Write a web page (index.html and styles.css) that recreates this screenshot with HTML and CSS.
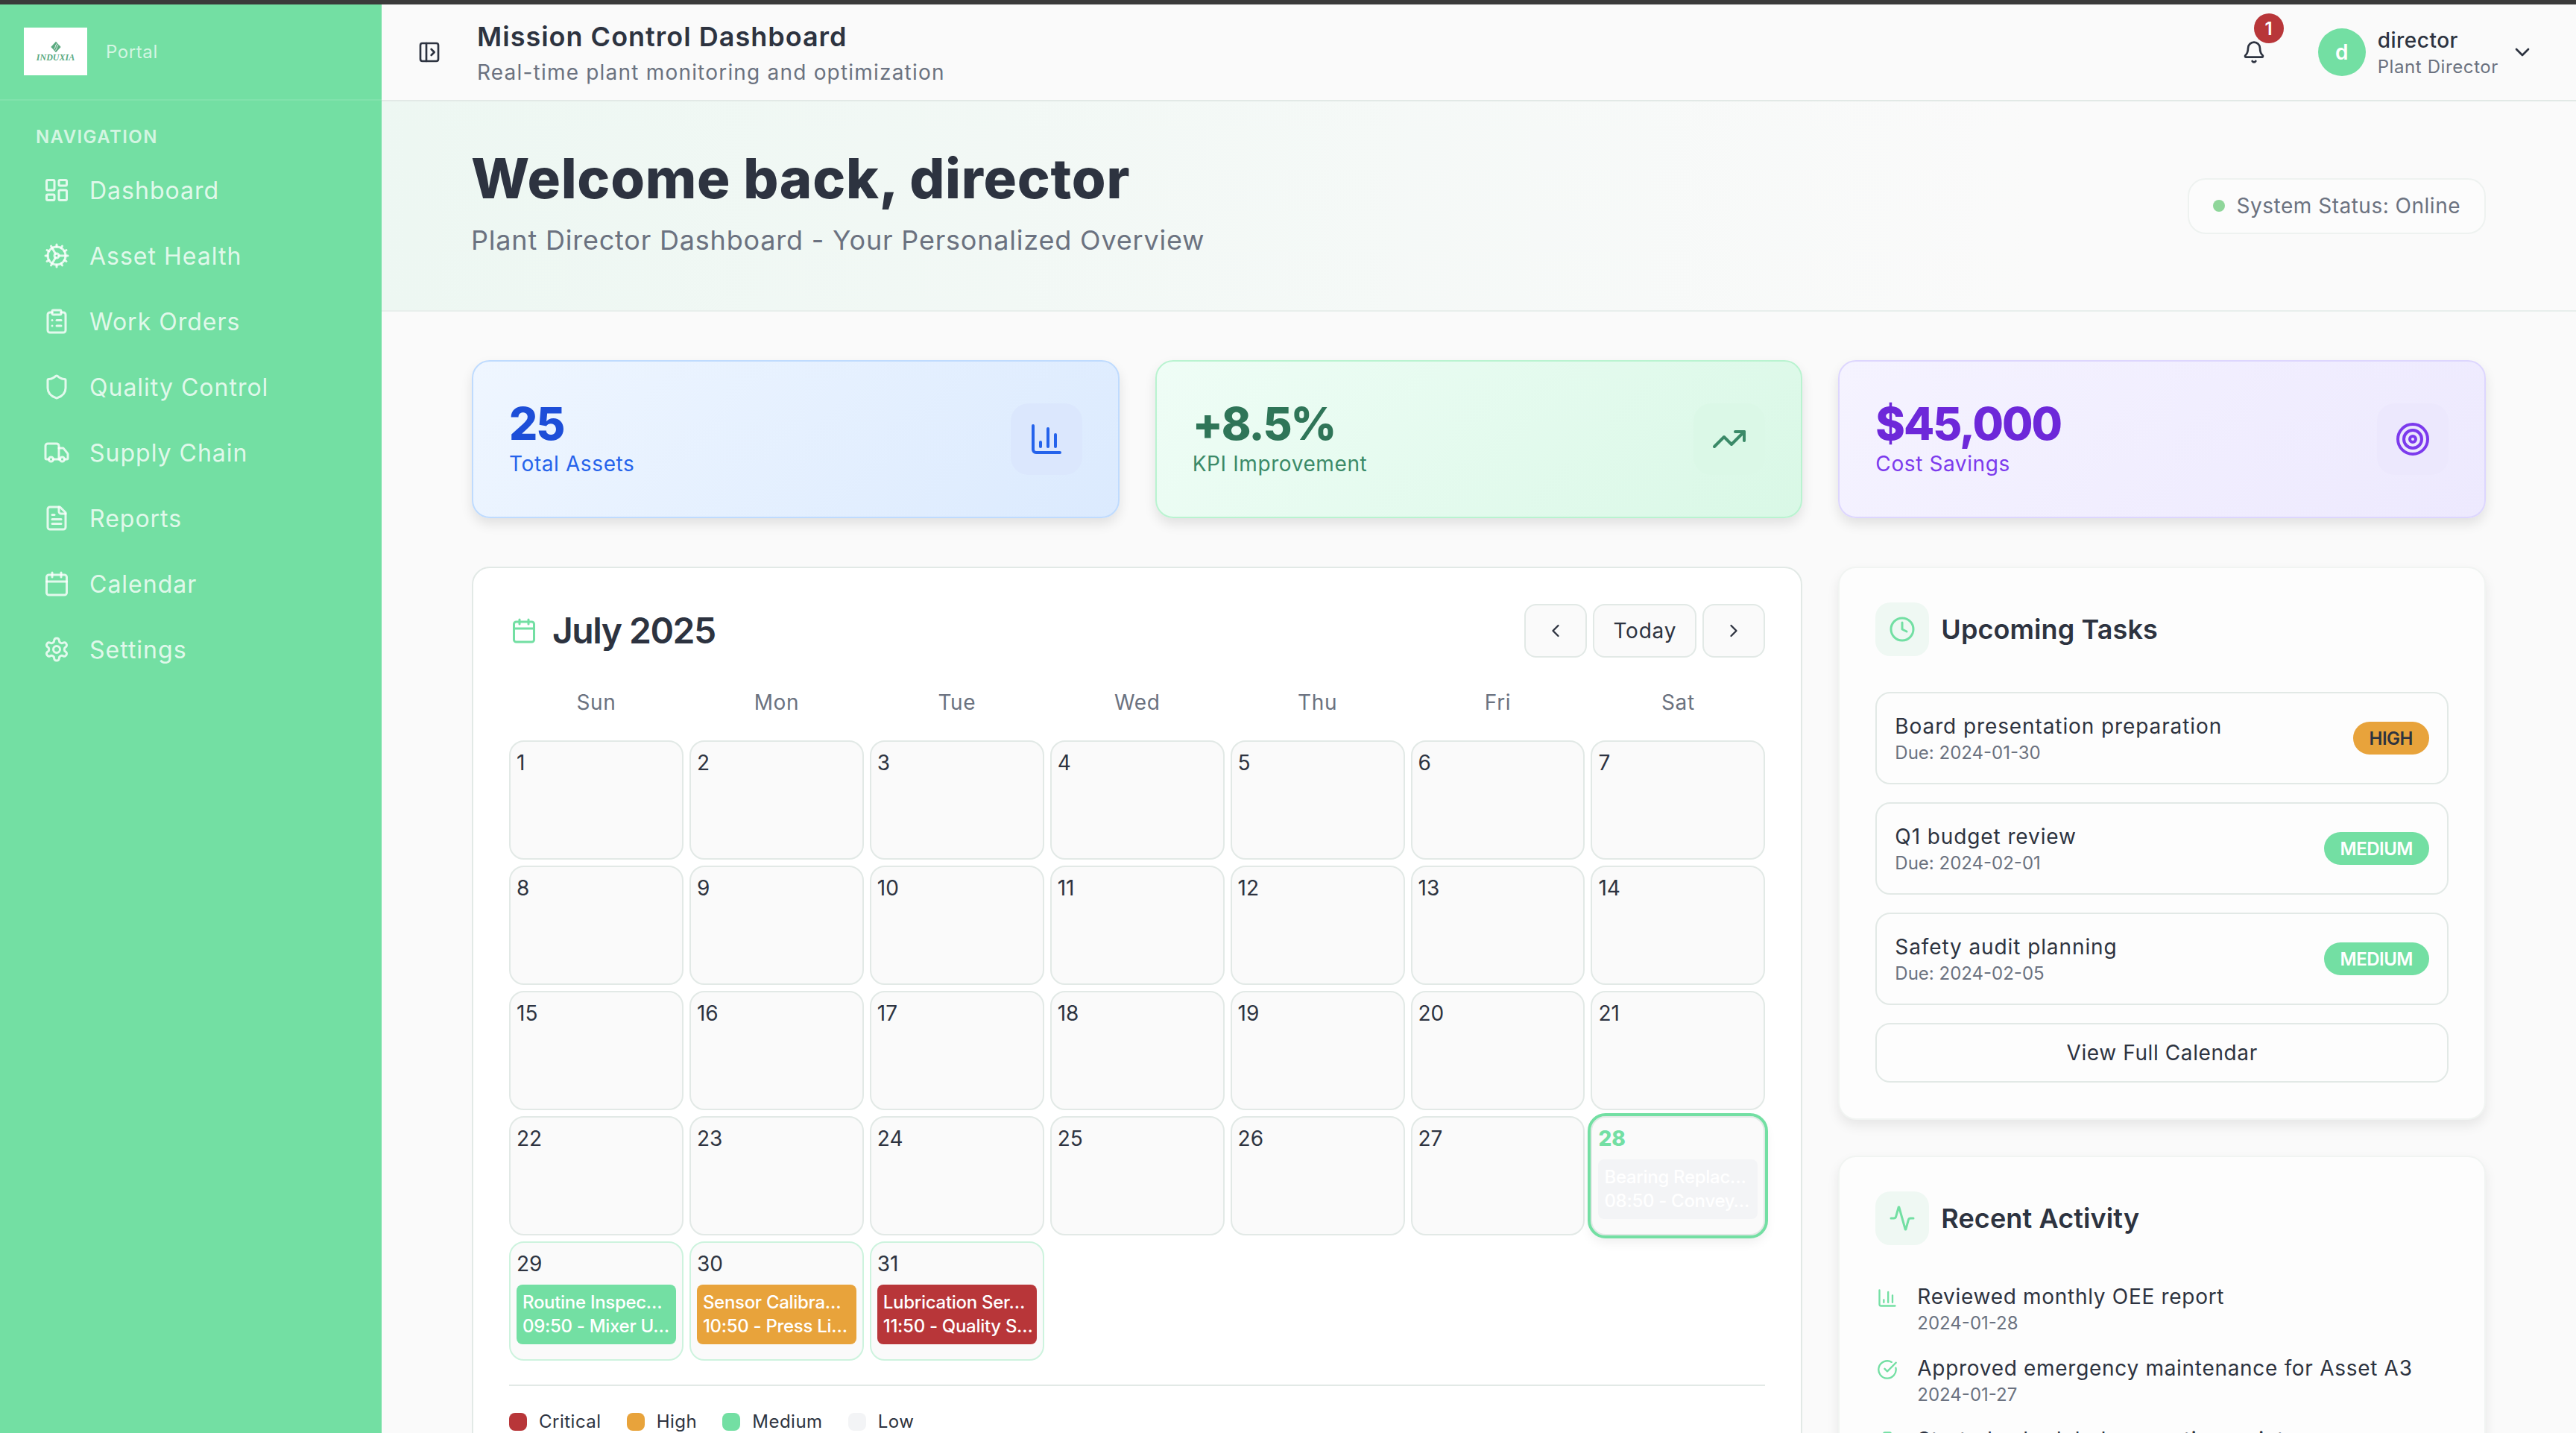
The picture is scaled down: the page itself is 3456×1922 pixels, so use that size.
FILE: index.html
```html
<!DOCTYPE html>
<html lang="en">
<head>
    <meta charset="UTF-8">
    <meta name="viewport" content="width=device-width, initial-scale=1.0">
    <title>Mission Control Dashboard</title>
    <link rel="stylesheet" href="styles.css">
</head>
<body>
    <svg class="sprite" xmlns="http://www.w3.org/2000/svg">
        <symbol id="i-dashboard" viewBox="0 0 24 24"><rect x="3" y="3" width="7" height="9" rx="1"/><rect x="14" y="3" width="7" height="5" rx="1"/><rect x="14" y="12" width="7" height="9" rx="1"/><rect x="3" y="16" width="7" height="5" rx="1"/></symbol>
        <symbol id="i-cog" viewBox="0 0 24 24"><path d="M12 20a8 8 0 1 0 0-16 8 8 0 0 0 0 16Z"/><path d="M12 14a2 2 0 1 0 0-4 2 2 0 0 0 0 4Z"/><path d="M12 2v2"/><path d="M12 22v-2"/><path d="m17 20.66-1-1.73"/><path d="M11 10.27 7 3.34"/><path d="m20.66 17-1.73-1"/><path d="m3.34 7 1.73 1"/><path d="M14 12h8"/><path d="M2 12h2"/><path d="m20.66 7-1.73 1"/><path d="m3.34 17 1.73-1"/><path d="m17 3.34-1 1.73"/><path d="m11 13.73-4 6.93"/></symbol>
        <symbol id="i-clipboard" viewBox="0 0 24 24"><rect x="8" y="2" width="8" height="4" rx="1"/><path d="M16 4h2a2 2 0 0 1 2 2v14a2 2 0 0 1-2 2H6a2 2 0 0 1-2-2V6a2 2 0 0 1 2-2h2"/><path d="M12 11h4"/><path d="M12 16h4"/><path d="M8 11h.01"/><path d="M8 16h.01"/></symbol>
        <symbol id="i-shield" viewBox="0 0 24 24"><path d="M20 13c0 5-3.5 7.5-7.66 8.95a1 1 0 0 1-.67-.01C7.5 20.5 4 18 4 13V6a1 1 0 0 1 1-1c2 0 4.5-1.2 6.24-2.72a1.17 1.17 0 0 1 1.52 0C14.51 3.81 17 5 19 5a1 1 0 0 1 1 1z"/></symbol>
        <symbol id="i-truck" viewBox="0 0 24 24"><path d="M14 18V6a2 2 0 0 0-2-2H4a2 2 0 0 0-2 2v11a1 1 0 0 0 1 1h2"/><path d="M15 18H9"/><path d="M19 18h2a1 1 0 0 0 1-1v-3.65a1 1 0 0 0-.22-.624l-3.48-4.35A1 1 0 0 0 17.52 8H14"/><circle cx="17" cy="18" r="2"/><circle cx="7" cy="18" r="2"/></symbol>
        <symbol id="i-file" viewBox="0 0 24 24"><path d="M15 2H6a2 2 0 0 0-2 2v16a2 2 0 0 0 2 2h12a2 2 0 0 0 2-2V7Z"/><path d="M14 2v4a2 2 0 0 0 2 2h4"/><path d="M10 9H8"/><path d="M16 13H8"/><path d="M16 17H8"/></symbol>
        <symbol id="i-calendar" viewBox="0 0 24 24"><path d="M8 2v4"/><path d="M16 2v4"/><rect x="3" y="4" width="18" height="18" rx="2"/><path d="M3 10h18"/></symbol>
        <symbol id="i-settings" viewBox="0 0 24 24"><path d="M12.22 2h-.44a2 2 0 0 0-2 2v.18a2 2 0 0 1-1 1.73l-.43.25a2 2 0 0 1-2 0l-.15-.08a2 2 0 0 0-2.73.73l-.22.38a2 2 0 0 0 .73 2.73l.15.1a2 2 0 0 1 1 1.72v.51a2 2 0 0 1-1 1.74l-.15.09a2 2 0 0 0-.73 2.73l.22.38a2 2 0 0 0 2.73.73l.15-.08a2 2 0 0 1 2 0l.43.25a2 2 0 0 1 1 1.73V20a2 2 0 0 0 2 2h.44a2 2 0 0 0 2-2v-.18a2 2 0 0 1 1-1.73l.43-.25a2 2 0 0 1 2 0l.15.08a2 2 0 0 0 2.73-.73l.22-.39a2 2 0 0 0-.73-2.73l-.15-.08a2 2 0 0 1-1-1.74v-.5a2 2 0 0 1 1-1.74l.15-.09a2 2 0 0 0 .73-2.73l-.22-.38a2 2 0 0 0-2.73-.73l-.15.08a2 2 0 0 1-2 0l-.43-.25a2 2 0 0 1-1-1.73V4a2 2 0 0 0-2-2z"/><circle cx="12" cy="12" r="3"/></symbol>
        <symbol id="i-panel" viewBox="0 0 24 24"><rect x="3" y="3" width="18" height="18" rx="2"/><path d="M9 3v18"/><path d="m14 9 3 3-3 3"/></symbol>
        <symbol id="i-bell" viewBox="0 0 24 24"><path d="M10.268 21a2 2 0 0 0 3.464 0"/><path d="M3.262 15.326A1 1 0 0 0 4 17h16a1 1 0 0 0 .74-1.673C19.41 13.956 18 12.499 18 8A6 6 0 0 0 6 8c0 4.499-1.411 5.956-2.738 7.326"/></symbol>
        <symbol id="i-down" viewBox="0 0 24 24"><path d="m6 9 6 6 6-6"/></symbol>
        <symbol id="i-left" viewBox="0 0 24 24"><path d="m15 18-6-6 6-6"/></symbol>
        <symbol id="i-right" viewBox="0 0 24 24"><path d="m9 18 6-6-6-6"/></symbol>
        <symbol id="i-chart" viewBox="0 0 24 24"><path d="M3 3v16a2 2 0 0 0 2 2h16"/><path d="M18 17V9"/><path d="M13 17V5"/><path d="M8 17v-3"/></symbol>
        <symbol id="i-trend" viewBox="0 0 24 24"><polyline points="22 7 13.5 15.5 8.5 10.5 2 17"/><polyline points="16 7 22 7 22 13"/></symbol>
        <symbol id="i-target" viewBox="0 0 24 24"><circle cx="12" cy="12" r="10"/><circle cx="12" cy="12" r="6"/><circle cx="12" cy="12" r="2"/></symbol>
        <symbol id="i-clock" viewBox="0 0 24 24"><circle cx="12" cy="12" r="10"/><polyline points="12 6 12 12 16 14"/></symbol>
        <symbol id="i-activity" viewBox="0 0 24 24"><path d="M22 12h-2.48a2 2 0 0 0-1.93 1.46l-2.35 8.36a.25.25 0 0 1-.48 0L9.24 2.18a.25.25 0 0 0-.48 0l-2.35 8.36A2 2 0 0 1 4.49 12H2"/></symbol>
        <symbol id="i-check" viewBox="0 0 24 24"><path d="M21.801 10A10 10 0 1 1 17 3.335"/><path d="m9 11 3 3L22 4"/></symbol>
    </svg>

    <div class="top-strip"></div>
    <div class="app">
        <aside class="sidebar">
            <div class="brand">
                <div class="logo-box">
                    <svg class="logo-mark" viewBox="0 0 24 24"><path d="M12 1 22 12 12 23 2 12Z" fill="#5aa97f"/><path d="M8 17C12 13 10 9 14 5M11 19C15 15 13 11 17 7" fill="none" stroke="#fff" stroke-width="1.3"/></svg>
                    <span class="logo-text">INDUXIA</span>
                </div>
                <span class="brand-portal">Portal</span>
            </div>
            <nav class="nav">
                <div class="nav-title">NAVIGATION</div>
                <a class="nav-item"><svg class="icon"><use href="#i-dashboard"/></svg>Dashboard</a>
                <a class="nav-item"><svg class="icon"><use href="#i-cog"/></svg>Asset Health</a>
                <a class="nav-item"><svg class="icon"><use href="#i-clipboard"/></svg>Work Orders</a>
                <a class="nav-item"><svg class="icon"><use href="#i-shield"/></svg>Quality Control</a>
                <a class="nav-item"><svg class="icon"><use href="#i-truck"/></svg>Supply Chain</a>
                <a class="nav-item"><svg class="icon"><use href="#i-file"/></svg>Reports</a>
                <a class="nav-item"><svg class="icon"><use href="#i-calendar"/></svg>Calendar</a>
                <a class="nav-item"><svg class="icon"><use href="#i-settings"/></svg>Settings</a>
            </nav>
        </aside>

        <main class="main">
            <header class="topbar">
                <svg class="icon toggle-icon"><use href="#i-panel"/></svg>
                <div class="topbar-titles">
                    <h1>Mission Control Dashboard</h1>
                    <p>Real-time plant monitoring and optimization</p>
                </div>
                <div class="bell">
                    <svg class="icon"><use href="#i-bell"/></svg>
                    <span class="bell-badge">1</span>
                </div>
                <div class="user">
                    <div class="avatar">d</div>
                    <div class="user-text">
                        <div class="user-name">director</div>
                        <div class="user-role">Plant Director</div>
                    </div>
                    <svg class="icon user-chevron"><use href="#i-down"/></svg>
                </div>
            </header>

            <section class="welcome">
                <div class="welcome-text">
                    <h2>Welcome back, director</h2>
                    <p>Plant Director Dashboard - Your Personalized Overview</p>
                </div>
                <div class="status-pill"><span class="status-dot"></span>System Status: Online</div>
            </section>

            <div class="content">
                <div class="kpi-grid">
                    <div class="kpi kpi-blue">
                        <div><div class="kpi-value">25</div><div class="kpi-label">Total Assets</div></div>
                        <div class="kpi-icon"><svg class="icon"><use href="#i-chart"/></svg></div>
                    </div>
                    <div class="kpi kpi-green">
                        <div><div class="kpi-value">+8.5%</div><div class="kpi-label">KPI Improvement</div></div>
                        <div class="kpi-icon"><svg class="icon"><use href="#i-trend"/></svg></div>
                    </div>
                    <div class="kpi kpi-purple">
                        <div><div class="kpi-value">$45,000</div><div class="kpi-label">Cost Savings</div></div>
                        <div class="kpi-icon"><svg class="icon"><use href="#i-target"/></svg></div>
                    </div>
                </div>

                <div class="lower-grid">
                    <section class="card calendar">
                        <div class="cal-head">
                            <svg class="icon cal-icon"><use href="#i-calendar"/></svg>
                            <h3>July 2025</h3>
                            <div class="cal-nav">
                                <button class="cal-btn"><svg class="icon"><use href="#i-left"/></svg></button>
                                <button class="cal-btn cal-today">Today</button>
                                <button class="cal-btn"><svg class="icon"><use href="#i-right"/></svg></button>
                            </div>
                        </div>
                        <div class="cal-grid cal-weekdays">
                            <div>Sun</div><div>Mon</div><div>Tue</div><div>Wed</div><div>Thu</div><div>Fri</div><div>Sat</div>
                        </div>
                        <div class="cal-grid">
                            <div class="day">1</div><div class="day">2</div><div class="day">3</div><div class="day">4</div><div class="day">5</div><div class="day">6</div><div class="day">7</div>
                            <div class="day">8</div><div class="day">9</div><div class="day">10</div><div class="day">11</div><div class="day">12</div><div class="day">13</div><div class="day">14</div>
                            <div class="day">15</div><div class="day">16</div><div class="day">17</div><div class="day">18</div><div class="day">19</div><div class="day">20</div><div class="day">21</div>
                            <div class="day">22</div><div class="day">23</div><div class="day">24</div><div class="day">25</div><div class="day">26</div><div class="day">27</div>
                            <div class="day day-today">28
                                <div class="event ev-low"><div>Bearing Replac…</div><div>08:50 - Convey…</div></div>
                            </div>
                            <div class="day day-event">29
                                <div class="event ev-medium"><div>Routine Inspec…</div><div>09:50 - Mixer U…</div></div>
                            </div>
                            <div class="day day-event">30
                                <div class="event ev-high"><div>Sensor Calibra…</div><div>10:50 - Press Li…</div></div>
                            </div>
                            <div class="day day-event">31
                                <div class="event ev-critical"><div>Lubrication Ser…</div><div>11:50 - Quality S…</div></div>
                            </div>
                        </div>
                        <div class="legend">
                            <div class="legend-item"><span class="swatch ev-critical"></span>Critical</div>
                            <div class="legend-item"><span class="swatch ev-high"></span>High</div>
                            <div class="legend-item"><span class="swatch ev-medium"></span>Medium</div>
                            <div class="legend-item"><span class="swatch ev-low"></span>Low</div>
                        </div>
                    </section>

                    <div class="side-col">
                        <section class="card side-card">
                            <div class="side-head">
                                <div class="side-icon"><svg class="icon"><use href="#i-clock"/></svg></div>
                                <h3>Upcoming Tasks</h3>
                            </div>
                            <div class="tasks">
                                <div class="task">
                                    <div><div class="task-title">Board presentation preparation</div><div class="task-due">Due: 2024-01-30</div></div>
                                    <span class="badge badge-high">HIGH</span>
                                </div>
                                <div class="task">
                                    <div><div class="task-title">Q1 budget review</div><div class="task-due">Due: 2024-02-01</div></div>
                                    <span class="badge badge-medium">MEDIUM</span>
                                </div>
                                <div class="task">
                                    <div><div class="task-title">Safety audit planning</div><div class="task-due">Due: 2024-02-05</div></div>
                                    <span class="badge badge-medium">MEDIUM</span>
                                </div>
                                <button class="full-btn">View Full Calendar</button>
                            </div>
                        </section>

                        <section class="card side-card">
                            <div class="side-head">
                                <div class="side-icon"><svg class="icon"><use href="#i-activity"/></svg></div>
                                <h3>Recent Activity</h3>
                            </div>
                            <div class="activity">
                                <div class="act-item">
                                    <svg class="icon act-icon"><use href="#i-chart"/></svg>
                                    <div><div class="act-title">Reviewed monthly OEE report</div><div class="act-date">2024-01-28</div></div>
                                </div>
                                <div class="act-item">
                                    <svg class="icon act-icon"><use href="#i-check"/></svg>
                                    <div><div class="act-title">Approved emergency maintenance for Asset A3</div><div class="act-date">2024-01-27</div></div>
                                </div>
                                <div class="act-item">
                                    <svg class="icon act-icon"><use href="#i-clipboard"/></svg>
                                    <div><div class="act-title">Started scheduled preventive maintenance</div><div class="act-date">2024-01-26</div></div>
                                </div>
                            </div>
                        </section>
                    </div>
                </div>
            </div>
        </main>
    </div>
</body>
</html>
```

FILE: styles.css
```css
* { margin: 0; padding: 0; box-sizing: border-box; }
html, body { height: 100%; overflow: hidden; }
body { font-family: Inter, "Noto Sans", sans-serif; background: #fafafa; color: #2d3340; display: flex; flex-direction: column; }
.sprite { display: none; }
.icon { width: 36px; height: 36px; fill: none; stroke: currentColor; stroke-width: 2; stroke-linecap: round; stroke-linejoin: round; flex-shrink: 0; display: block; }
.top-strip { height: 6px; background: #3a3a3a; flex-shrink: 0; }
.app { flex: 1; display: flex; min-height: 0; }

/* sidebar */
.sidebar { width: 512px; background: #73dfa3; flex-shrink: 0; color: rgba(255,255,255,0.8); }
.brand { height: 129px; display: flex; align-items: center; padding: 0 32px 1px; gap: 25px; border-bottom: 2px solid rgba(255,255,255,0.1); }
.logo-box { width: 85px; height: 64px; background: #fff; display: flex; flex-direction: column; align-items: center; justify-content: center; gap: 1px; }
.logo-mark { width: 16px; height: 16px; }
.logo-text { font-family: "Liberation Serif", serif; font-style: italic; font-weight: 700; font-size: 12px; line-height: 11px; color: #5aa97f; }
.brand-portal { font-size: 24px; letter-spacing: 0.6px; color: rgba(255,255,255,0.7); }
.nav { padding: 33px 48px; }
.nav-title { font-size: 24px; line-height: 32px; font-weight: 600; letter-spacing: 1.4px; color: rgba(255,255,255,0.7); margin-bottom: 11px; }
.nav-item { height: 88px; display: flex; align-items: center; gap: 26px; padding-left: 10px; font-size: 32px; letter-spacing: 1px; }

/* top bar */
.main { flex: 1; min-width: 0; display: flex; flex-direction: column; }
.topbar { height: 130px; display: flex; align-items: center; padding: 0 56px 0 48px; border-bottom: 2px solid #e2e9e6; background: #fafafa; flex-shrink: 0; }
.toggle-icon { width: 32px; height: 32px; margin-right: 48px; }
.topbar-titles { flex: 1; padding-top: 3px; }
.topbar h1 { font-size: 36px; line-height: 44px; font-weight: 600; letter-spacing: 1px; }
.topbar p { font-size: 28px; line-height: 40px; color: #6b7280; letter-spacing: 1.2px; margin-top: 6px; }
.bell { position: relative; margin-right: 70px; }
.bell .icon { width: 32px; height: 32px; }
.bell-badge { position: absolute; top: -36px; left: 16px; width: 40px; height: 40px; border-radius: 50%; background: #b83639; color: #fff; font-size: 24px; font-weight: 600; display: flex; align-items: center; justify-content: center; }
.user { display: flex; align-items: center; gap: 16px; }
.avatar { width: 64px; height: 64px; border-radius: 50%; background: #73dfa3; color: #fff; font-size: 28px; font-weight: 600; display: flex; align-items: center; justify-content: center; }
.user-text { padding-top: 3px; }
.user-name { font-size: 28px; line-height: 36px; font-weight: 500; letter-spacing: 0.5px; }
.user-role { font-size: 24px; line-height: 36px; color: #6b7280; letter-spacing: 0.6px; }
.user-chevron { width: 32px; height: 32px; }

/* welcome band */
.welcome { height: 282px; flex-shrink: 0; display: flex; align-items: center; justify-content: space-between; padding: 0 121px 0 120px; background: linear-gradient(90deg, #edf7f2 0%, #fafafa 75%); border-bottom: 2px solid #e8efec; }
.welcome-text { padding-bottom: 10px; }
.welcome h2 { font-size: 74px; line-height: 88px; font-weight: 800; letter-spacing: 0.75px; }
.welcome p { font-size: 36px; line-height: 50px; color: #6b7280; margin-top: 14px; letter-spacing: 0.8px; }
.status-pill { height: 75px; display: flex; align-items: center; gap: 16px; padding: 0 32px; border: 2px solid #eef2f0; border-radius: 24px; background: #fcfcfc; font-size: 28px; letter-spacing: 0.5px; color: #6b7280; }
.status-dot { width: 16px; height: 16px; border-radius: 50%; background: #8fd69a; }

/* content */
.content { padding: 65px 121px; }
.kpi-grid { display: grid; grid-template-columns: repeat(3, minmax(0, 1fr)); gap: 48px; }
.kpi { height: 212px; border-radius: 24px; border: 2px solid; padding: 0 48px 8px; display: flex; align-items: center; justify-content: space-between; box-shadow: 0 8px 16px rgba(0,0,0,0.1); }
.kpi-value { font-size: 60px; line-height: 72px; font-weight: 800; letter-spacing: -2px; }
.kpi-label { font-size: 28px; line-height: 32px; margin-top: 2px; letter-spacing: 0.6px; }
.kpi-icon { width: 96px; height: 96px; border-radius: 24px; display: flex; align-items: center; justify-content: center; margin-top: 8px; }
.kpi-icon .icon { width: 48px; height: 48px; }
.kpi-blue { background: linear-gradient(135deg, #eff6ff, #dbeafe); border-color: #bfdbfe; }
.kpi-blue .kpi-value { color: #1d4ed8; }
.kpi-blue .kpi-label, .kpi-blue .icon { color: #2563eb; }
.kpi-blue .kpi-icon { background: #dbe7fd; }
.kpi-green { background: linear-gradient(135deg, #effdf6, #d9f8e6); border-color: #b9f3d0; }
.kpi-green .kpi-value { color: #2f7558; }
.kpi-green .kpi-label, .kpi-green .icon { color: #3b8a68; }
.kpi-green .kpi-icon { background: #dbf8e7; }
.kpi-purple { background: linear-gradient(135deg, #f5f3ff, #ede9fe); border-color: #ddd6fe; }
.kpi-purple .kpi-value { color: #6d28d9; }
.kpi-purple .kpi-label, .kpi-purple .icon { color: #7c3aed; }
.kpi-purple .kpi-icon { background: #ece8fd; }

.lower-grid { display: grid; grid-template-columns: repeat(3, minmax(0, 1fr)); gap: 48px; margin-top: 65px; align-items: start; }
.card { background: #fff; border: 2px solid #e2e9e6; border-radius: 24px; padding: 48px; }
.calendar { grid-column: span 2; }

/* calendar */
.cal-head { display: flex; align-items: center; height: 72px; }
.cal-icon { color: #73dfa3; margin-right: 20px; margin-left: 2px; }
.cal-head h3 { font-size: 48px; font-weight: 600; flex: 1; letter-spacing: -1.5px; padding-bottom: 2px; }
.cal-nav { display: flex; gap: 8px; }
.cal-btn { width: 84px; height: 72px; border: 2px solid #e2e9e6; border-radius: 16px; background: #fafafa; color: #2d3340; font-family: inherit; font-size: 28px; letter-spacing: 0.8px; display: flex; align-items: center; justify-content: center; }
.cal-btn .icon { width: 28px; height: 28px; }
.cal-today { width: 139px; }
.cal-grid { display: grid; grid-template-columns: repeat(7, minmax(0, 1fr)); gap: 8px; grid-auto-rows: 160px; }
.cal-weekdays { grid-auto-rows: 40px; margin: 40px 0 31px; text-align: center; font-size: 28px; line-height: 40px; color: #6b7280; letter-spacing: 0.6px; }
.day { border: 2px solid #e2e9e6; border-radius: 20px; background: #fafafa; padding: 8px; font-size: 28px; line-height: 40px; min-width: 0; }
.day-event { border-color: #cdf3de; }
.day-today { border-color: #e2e9e6; outline: 4px solid #73dfa3; color: #73dfa3; font-weight: 800; box-shadow: 0 8px 16px rgba(0,0,0,0.08); }
.event { margin-top: 8px; height: 80px; padding: 8px; border-radius: 8px; color: #fff; font-size: 24px; line-height: 32px; font-weight: 500; letter-spacing: -0.3px; white-space: nowrap; overflow: hidden; }
.ev-critical { background: #b83639; }
.ev-high { background: #e8a33b; }
.ev-medium { background: #73dfa3; }
.ev-low { background: #f3f4f6; }
.legend { margin-top: 32px; padding-top: 36px; border-top: 2px solid #e2e9e6; display: flex; gap: 34px; font-size: 24px; line-height: 24px; letter-spacing: 0.5px; }
.legend-item { display: flex; align-items: center; gap: 16px; }
.swatch { width: 24px; height: 24px; border-radius: 8px; }

/* side column */
.side-col { display: flex; flex-direction: column; gap: 48px; }
.side-card { padding-top: 46px; box-shadow: 0 8px 16px rgba(0,0,0,0.08); border-color: #f1f4f2; background: #fdfdfd; }
.side-head { display: flex; align-items: center; gap: 16px; }
.side-head h3 { font-size: 36px; font-weight: 600; letter-spacing: 0.1px; }
.side-icon { width: 72px; height: 72px; border-radius: 20px; background: #eff8f3; display: flex; align-items: center; justify-content: center; color: #73dfa3; }
.tasks { margin-top: 48px; display: flex; flex-direction: column; gap: 24px; }
.task { height: 124px; border: 2px solid #e2e9e6; border-radius: 20px; padding: 0 24px; display: flex; align-items: center; justify-content: space-between; }
.task-title { font-size: 28px; line-height: 40px; letter-spacing: 0.9px; }
.task-due { font-size: 24px; line-height: 32px; color: #6b7280; }
.badge { height: 44px; padding: 0 22px; border-radius: 22px; font-size: 24px; font-weight: 600; letter-spacing: -0.5px; display: flex; align-items: center; }
.badge-high { background: #e8a33b; color: #2d3340; }
.badge-medium { background: #73dfa3; color: #fff; }
.full-btn { height: 80px; border: 2px solid #e2e9e6; border-radius: 20px; background: #fdfdfd; color: #2d3340; font-family: inherit; font-size: 28px; letter-spacing: 0.6px; }
.activity { margin-top: 49px; display: flex; flex-direction: column; gap: 24px; }
.act-item { display: flex; gap: 26px; }
.act-icon { width: 28px; height: 28px; color: #73dfa3; margin-top: 8px; margin-left: 2px; }
.act-title { font-size: 28px; line-height: 40px; letter-spacing: 0.7px; }
.act-date { font-size: 24px; line-height: 32px; color: #6b7280; }
```
